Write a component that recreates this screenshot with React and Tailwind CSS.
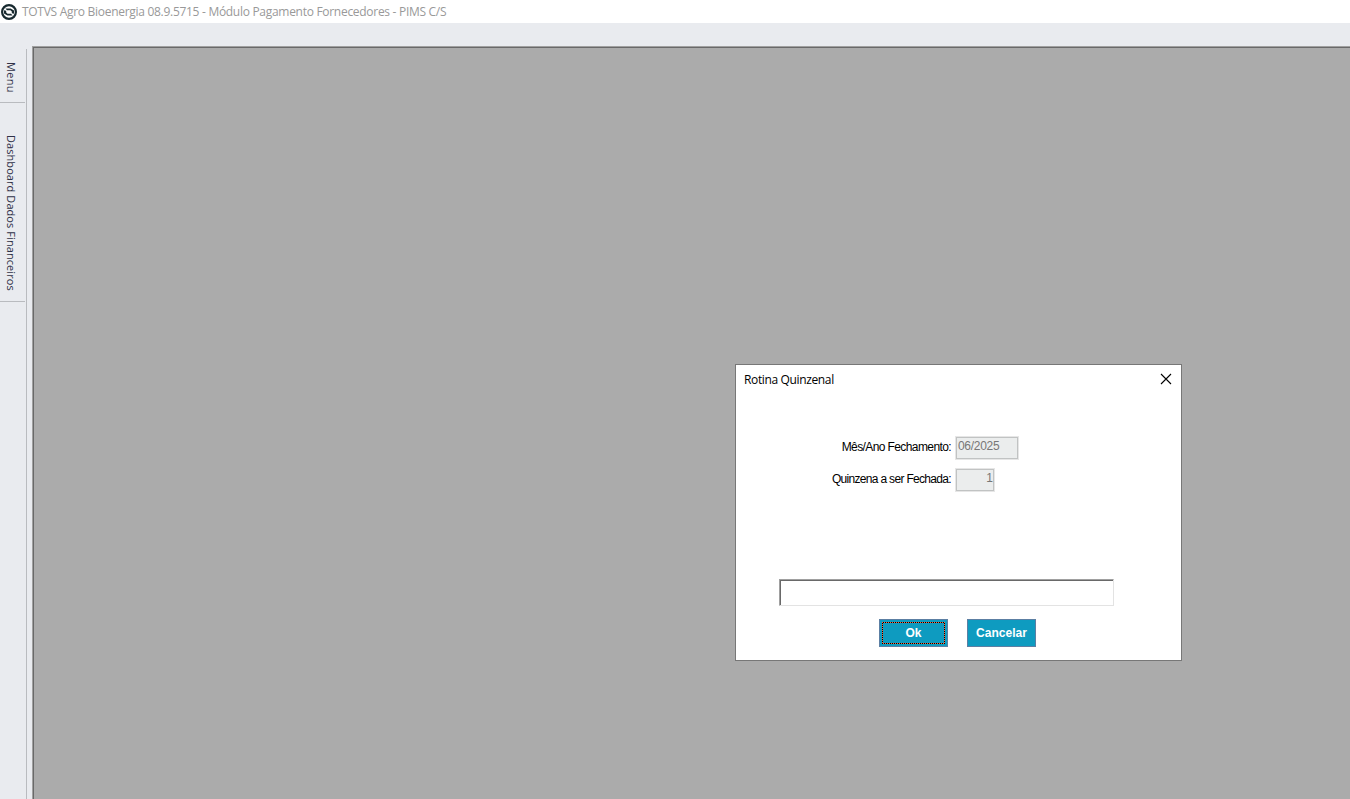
import React from 'react';

const sideTabs = [
  { label: 'Menu', box: 'h-[54px] pt-[13px]', text: 'tracking-[0.35px]' },
  { label: 'Dashboard Dados Financeiros', box: 'h-[199px] pt-[32px]', text: 'tracking-[0.07px]' },
];

function AppLogo() {
  return (
    <svg width="16" height="16" viewBox="0 0 16 16">
      <circle cx="8" cy="8" r="6.9" fill="none" stroke="#17292f" strokeWidth="2.2" />
      <path d="M4.4 4.4l5.2.2 3.4 2v3.2l-2.2-.6V7.4L9.4 6.2H6z" fill="#17292f" />
      <path d="M11.6 11.6l-5.2-.2-3.4-2V6.2l2.2.6v1.8l1.4 1.2H10z" fill="#17292f" />
    </svg>
  );
}

function TitleBar() {
  return (
    <header className="flex h-[23px] items-center bg-white pl-px">
      <AppLogo />
      <h1 className="ml-[5px] whitespace-nowrap text-[12px] leading-[23px] tracking-[-0.29px] text-[#999999]">
        TOTVS Agro Bioenergia 08.9.5715 - Módulo Pagamento Fornecedores - PIMS C/S
      </h1>
    </header>
  );
}

function SideBar() {
  return (
    <nav className="mt-[26px] w-[27px] shrink-0 border-r border-[#b9bbbf]">
      {sideTabs.map((tab) => (
        <div
          key={tab.label}
          className={`flex w-[25px] justify-center border-b border-[#b9bbbf] pr-[3px] ${tab.box}`}
        >
          <span
            className={`whitespace-nowrap text-[11px] leading-[16px] text-[#2f3147] [writing-mode:vertical-rl] ${tab.text}`}
          >
            {tab.label}
          </span>
        </div>
      ))}
    </nav>
  );
}

function Field({ label, labelClass, value, valueClass }) {
  return (
    <div className="flex h-6">
      <label
        className={`w-[215px] whitespace-nowrap text-right text-[12px] leading-[22px] text-black ${labelClass}`}
      >
        {label}
      </label>
      <div className={`ml-[4px] h-6 border border-[#e6e6e6] ${valueClass}`}>
        <div className="h-full border border-[#c1c3c3] bg-[#ebeded] pl-px text-[12px] leading-[17px] text-[#777777]">
          {value}
        </div>
      </div>
    </div>
  );
}

function DialogButton({ children, focused }) {
  return (
    <button className="relative h-7 w-[69px] border border-[#5c7fa3] bg-[#0e9bc0] text-[12px] font-bold leading-[26px] tracking-[0.05px] text-white">
      {focused && (
        <span className="absolute inset-[2px] bg-[repeating-conic-gradient(#000_0_25%,#ff6238_0_50%)] bg-[length:2px_2px] p-px">
          <span className="block h-full bg-[#0e9bc0]" />
        </span>
      )}
      <span className="relative">{children}</span>
    </button>
  );
}

function RotinaDialog() {
  return (
    <section className="absolute left-[701px] top-[316px] h-[297px] w-[447px] border border-[#777777] bg-white font-['Liberation_Sans',sans-serif]">
      <div className="flex h-[30px] items-center justify-between pl-2 pr-[9px]">
        <h2 className="whitespace-nowrap font-['Open_Sans',sans-serif] text-[12px] leading-[30px] tracking-[-0.36px] text-black">
          Rotina Quinzenal
        </h2>
        <svg width="12" height="12" viewBox="0 0 12 12" className="mb-[2px]" stroke="#000">
          <path d="M1 1l10 10M11 1l-10 10" strokeWidth="1.1" />
        </svg>
      </div>

      <div className="mt-[41px] flex flex-col gap-2">
        <Field
          label="Mês/Ano Fechamento:"
          labelClass="tracking-[-0.6px]"
          value="06/2025"
          valueClass="w-16 tracking-[-0.3px]"
        />
        <Field
          label="Quinzena a ser Fechada:"
          labelClass="tracking-[-0.68px]"
          value="1"
          valueClass="w-10 text-right"
        />
      </div>

      <div className="ml-[43px] mt-[87px] h-[27px] w-[335px] border border-b-[#e3e3e3] border-l-[#a0a0a0] border-r-[#e3e3e3] border-t-[#a0a0a0]">
        <div className="h-full border-l border-t border-[#696969]" />
      </div>

      <div className="ml-[143px] mt-[13px] flex gap-[19px]">
        <DialogButton focused>Ok</DialogButton>
        <DialogButton>Cancelar</DialogButton>
      </div>
    </section>
  );
}

export default function App() {
  return (
    <div className="flex h-screen flex-col overflow-hidden bg-[#e9ebef] font-['Open_Sans',sans-serif]">
      <TitleBar />
      <div className="flex min-h-0 flex-1">
        <SideBar />
        <main className="ml-[5px] mt-[23px] flex-1 border-l border-t border-[#a0a0a0]">
          <div className="relative h-full border-l border-t border-[#696969] bg-[#ababab]">
            <RotinaDialog />
          </div>
        </main>
      </div>
    </div>
  );
}
